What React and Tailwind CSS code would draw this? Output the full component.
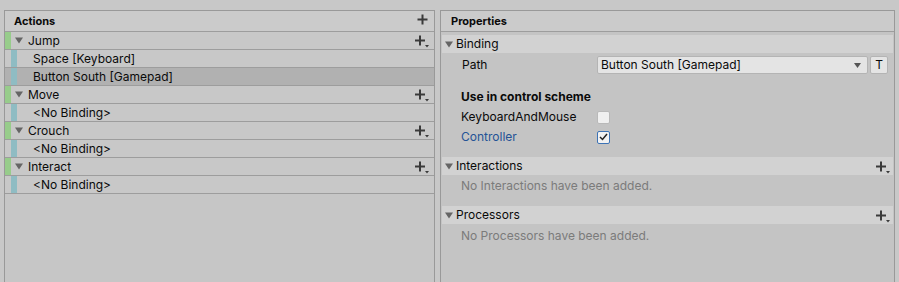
import React from 'react';

const font = { fontFamily: 'Inter, "Noto Sans", sans-serif' };

function Arrow() {
  return (
    <svg width="8" height="7" viewBox="0 0 8 7" className="shrink-0">
      <path d="M0 0.5 L8 0.5 L4 6.5 Z" fill="#656565" />
    </svg>
  );
}

function PlusMenu() {
  return (
    <svg width="14" height="13" viewBox="0 0 14 13" className="shrink-0">
      <path d="M5 0.5 V10.5 M0 5.5 H10" stroke="#3a3a3a" strokeWidth="2" fill="none" />
      <path d="M10 10 L14 10 L12 12.5 Z" fill="#3a3a3a" />
    </svg>
  );
}

function Plus() {
  return (
    <svg width="11" height="11" viewBox="0 0 11 11" className="shrink-0">
      <path d="M5.5 0.5 V10.5 M0.5 5.5 H10.5" stroke="#3a3a3a" strokeWidth="2" fill="none" />
    </svg>
  );
}

function ActionRow({ name }) {
  return (
    <div className="flex h-[18px] items-center border-b border-[#9d9d9d] bg-[#c8c8c8]">
      <div className="h-full w-[6px] bg-[#97cc8b]" />
      <div className="ml-[4px] flex items-center gap-[5px]">
        <Arrow />
        <span className="text-[12px] text-[#0a0a0a]">{name}</span>
      </div>
      <div className="ml-auto mr-[5px] pt-[2px]">
        <PlusMenu />
      </div>
    </div>
  );
}

function BindingRow({ name, selected }) {
  return (
    <div
      className={
        'flex h-[18px] items-center border-b border-[#9d9d9d] ' +
        (selected ? 'bg-[#b1b1b1]' : 'bg-[#c8c8c8]')
      }
    >
      <div className="ml-[6px] h-full w-[6px] bg-[#8fbcc3]" />
      <span className="ml-[16px] text-[12px] text-[#0a0a0a]">{name}</span>
    </div>
  );
}

function FoldoutBar({ title, add }) {
  return (
    <div className="flex h-[18px] items-center bg-[#d2d2d2] pl-[3px]">
      <Arrow />
      <span className="ml-[3px] text-[12px] text-[#0a0a0a]">{title}</span>
      {add && (
        <div className="ml-auto mr-[3px] pt-[2px]">
          <PlusMenu />
        </div>
      )}
    </div>
  );
}

function Checkbox({ checked }) {
  return (
    <div
      className={
        'flex h-[13px] w-[13px] items-center justify-center rounded-[2px] border ' +
        (checked ? 'border-[#3d73b5] bg-[#f2f2f2]' : 'border-[#b9b9b9] bg-[#f0f0f0]')
      }
    >
      {checked && (
        <svg width="9" height="8" viewBox="0 0 9 8">
          <path d="M1 4 L3.5 6.5 L8 1" stroke="#222" strokeWidth="1.5" fill="none" />
        </svg>
      )}
    </div>
  );
}

export default function App() {
  return (
    <div style={font} className="flex h-[282px] w-[899px] gap-[5px] overflow-hidden bg-[#c8c8c8] pl-[4px] pt-[10px]">
      {/* Actions panel */}
      <div className="flex w-[431px] flex-col border-l border-r border-t border-[#999999] bg-[#c6c6c6]">
        <div className="flex h-[21px] shrink-0 items-center border-b border-[#9d9d9d] bg-[#cbcbcb] pl-[9px] pr-[6px]">
          <span className="text-[11px] font-bold text-[#0a0a0a]">Actions</span>
          <div className="ml-auto pb-[3px]">
            <Plus />
          </div>
        </div>
        <ActionRow name="Jump" />
        <BindingRow name="Space [Keyboard]" />
        <BindingRow name="Button South [Gamepad]" selected />
        <ActionRow name="Move" />
        <BindingRow name="<No Binding>" />
        <ActionRow name="Crouch" />
        <BindingRow name="<No Binding>" />
        <ActionRow name="Interact" />
        <BindingRow name="<No Binding>" />
      </div>

      {/* Properties panel */}
      <div className="flex w-[455px] flex-col border-l border-r border-t border-[#999999] bg-[#c4c4c4]">
        <div className="flex h-[21px] shrink-0 items-center border-b border-[#9d9d9d] bg-[#cbcbcb] pl-[10px]">
          <span className="text-[11px] font-bold text-[#0a0a0a]">Properties</span>
        </div>
        <div className="flex flex-col px-[1px] pt-[3px]">
          <FoldoutBar title="Binding" />
          <div className="mt-[3px] flex h-[18px] items-center">
            <span className="w-[155px] pl-[20px] text-[12px] text-[#0a0a0a]">Path</span>
            <div className="flex h-[18px] w-[271px] items-center rounded-[2px] border border-[#b4b4b4] bg-[#e4e4e4] pl-[3px] pr-[6px]">
              <span className="text-[12px] text-[#0a0a0a]">Button South [Gamepad]</span>
              <svg width="7" height="5" viewBox="0 0 7 5" className="ml-auto">
                <path d="M0 0 L7 0 L3.5 5 Z" fill="#555" />
              </svg>
            </div>
            <div className="ml-[2px] flex h-[18px] w-[18px] items-center justify-center rounded-[2px] border border-[#b4b4b4] bg-[#e4e4e4] text-[12px] text-[#0a0a0a]">
              T
            </div>
          </div>
          <div className="mt-[14px] flex h-[18px] items-center pl-[19px]">
            <span className="text-[12px] font-bold text-[#0a0a0a]">Use in control scheme</span>
          </div>
          <div className="mt-[2px] flex h-[18px] items-center pl-[19px]">
            <span className="w-[136px] text-[12px] text-[#0a0a0a]">KeyboardAndMouse</span>
            <Checkbox />
          </div>
          <div className="mt-[2px] flex h-[18px] items-center pl-[19px]">
            <span className="w-[136px] text-[12px] text-[#245396]">Controller</span>
            <Checkbox checked />
          </div>
          <div className="mt-[11px]">
            <FoldoutBar title="Interactions" add />
          </div>
          <div className="flex h-[22px] items-center pl-[19px]">
            <span className="text-[12px] text-[#7b7b7b]">No Interactions have been added.</span>
          </div>
          <div className="mt-[9px]">
            <FoldoutBar title="Processors" add />
          </div>
          <div className="flex h-[24px] items-center pl-[19px]">
            <span className="text-[12px] text-[#7b7b7b]">No Processors have been added.</span>
          </div>
        </div>
      </div>
    </div>
  );
}
